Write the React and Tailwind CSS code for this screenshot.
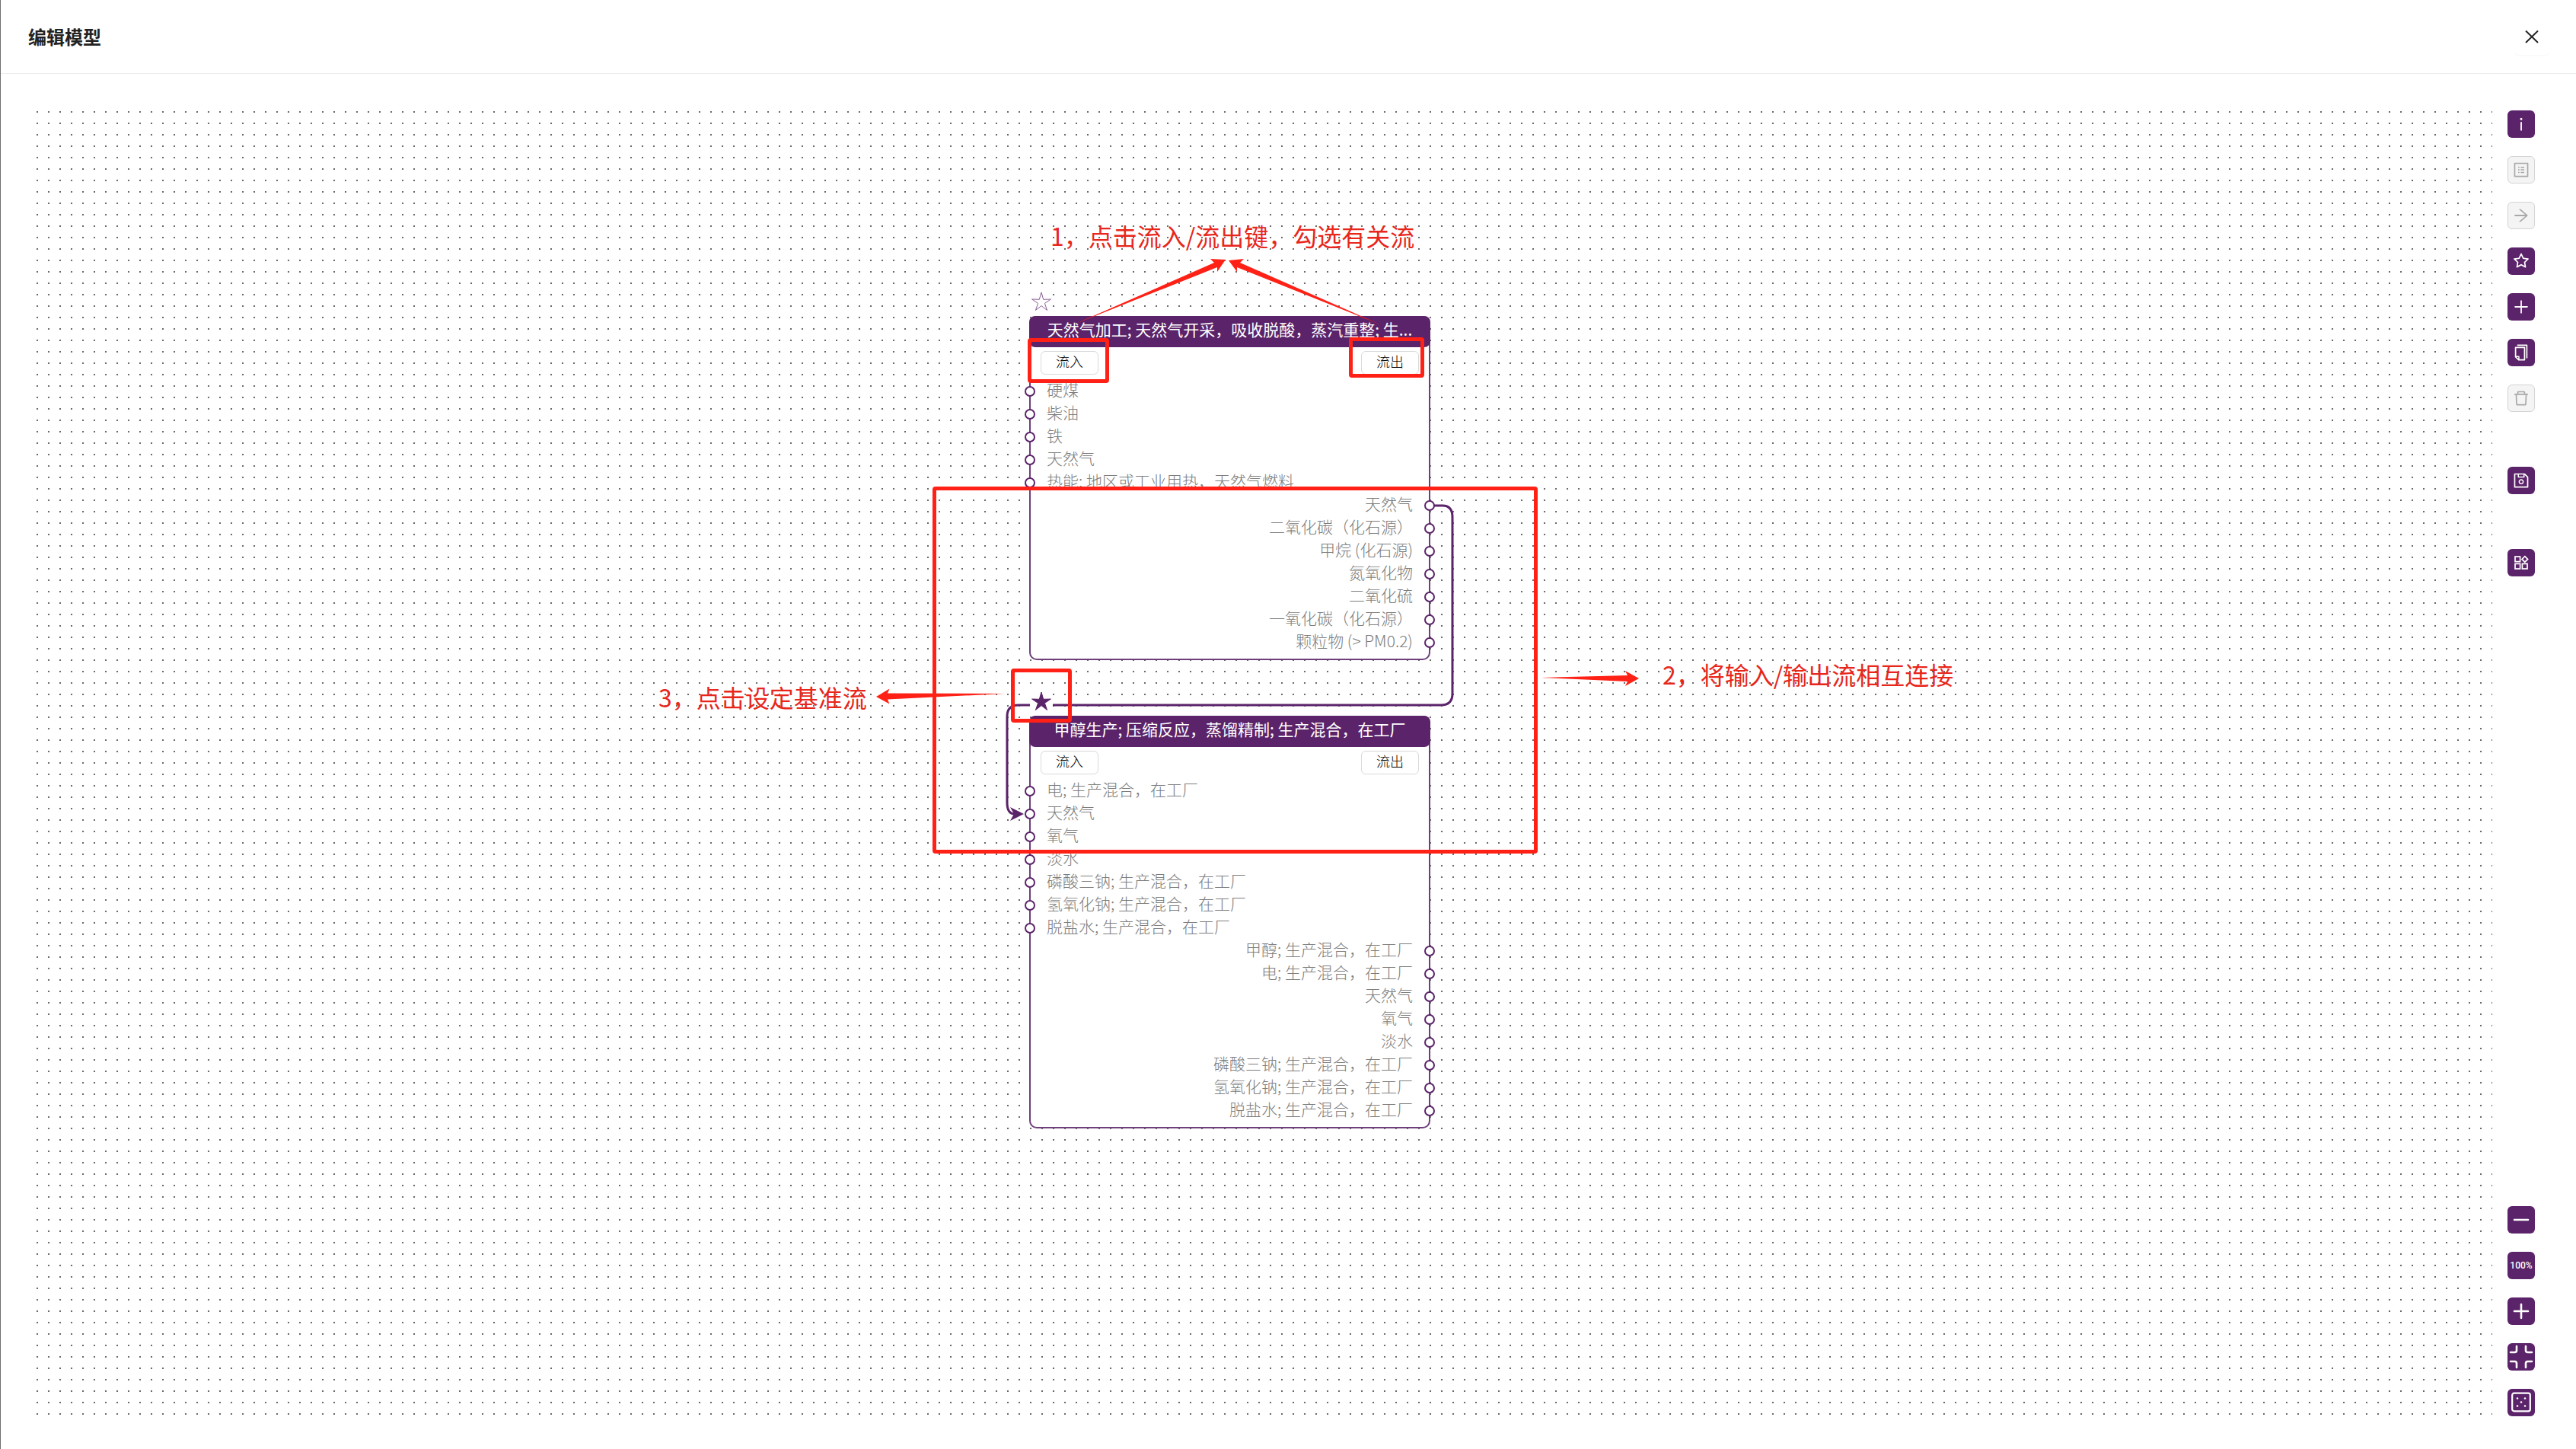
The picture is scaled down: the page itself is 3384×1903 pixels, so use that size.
import {
  AiOutlineArrowRight,
  AiOutlineCopy,
  AiOutlineDelete,
  AiOutlineInfo,
  AiOutlinePlus,
  AiOutlineProfile,
  AiOutlineSave,
  AiOutlineStar,
} from 'react-icons/ai'

function ToolButton({ label, disabled, children }) {
  return (
    <button
      type="button"
      aria-label={label}
      disabled={disabled}
      className="flex size-9 items-center justify-center rounded-md bg-[#5b2369] text-white disabled:border disabled:border-[#d4d4d4] disabled:bg-[#f4f4f4] disabled:text-[#a8a8a8]"
    >
      {children}
    </button>
  )
}

function ModulesIcon() {
  return (
    <svg viewBox="0 0 24 24" className="size-6" fill="none" stroke="currentColor" strokeWidth="1.7">
      <rect x="4" y="4" width="6.6" height="6.6" />
      <rect x="4" y="13.4" width="6.6" height="6.6" />
      <rect x="13.4" y="13.4" width="6.6" height="6.6" />
      <path d="M16.8 3.6 20.6 7.4 16.8 11.2 13 7.4Z" />
    </svg>
  )
}

function LineIcon({ d }) {
  return (
    <svg viewBox="0 0 36 36" className="size-9" fill="none" stroke="currentColor" strokeWidth="2.6" strokeLinecap="round">
      <path d={d} />
    </svg>
  )
}

function FitIcon() {
  return (
    <svg viewBox="0 0 36 36" className="size-9" fill="currentColor">
      <rect x="6.2" y="5.7" width="23.6" height="23.6" rx="2.5" fill="none" stroke="currentColor" strokeWidth="2.2" />
      <circle cx="13" cy="12.500" r="1.3" />
      <circle cx="23" cy="12.500" r="1.3" />
      <circle cx="18" cy="17.500" r="1.3" />
      <circle cx="13" cy="22.500" r="1.3" />
      <circle cx="23" cy="22.500" r="1.3" />
    </svg>
  )
}

function Toolbar() {
  return (
    <div className="flex w-9 shrink-0 flex-col pt-3">
      <div className="flex flex-col gap-6">
        <ToolButton label="信息"><AiOutlineInfo className="size-6" /></ToolButton>
        <ToolButton label="详情" disabled><AiOutlineProfile className="size-6" /></ToolButton>
        <ToolButton label="跳转" disabled><AiOutlineArrowRight className="size-6" /></ToolButton>
        <ToolButton label="基准"><AiOutlineStar className="size-6" /></ToolButton>
        <ToolButton label="添加"><AiOutlinePlus className="size-6" /></ToolButton>
        <ToolButton label="复制"><AiOutlineCopy className="size-6" /></ToolButton>
        <ToolButton label="删除" disabled><AiOutlineDelete className="size-6" /></ToolButton>
      </div>
      <div className="mt-18 flex flex-col gap-18">
        <ToolButton label="保存"><AiOutlineSave className="size-6" /></ToolButton>
        <ToolButton label="模块"><ModulesIcon /></ToolButton>
      </div>
      <div className="mt-auto flex flex-col gap-6">
        <ToolButton label="缩小"><LineIcon d="M9 18H27" /></ToolButton>
        <ToolButton label="缩放比例">
          <span className="font-['Roboto',sans-serif] text-[12px] leading-4 font-medium">100%</span>
        </ToolButton>
        <ToolButton label="放大"><LineIcon d="M9 18H27M18 9V27" /></ToolButton>
        <ToolButton label="收起">
          <LineIcon d="M4 12H9.5Q12 12 12 9.5V4M32 12H26.5Q24 12 24 9.5V4M4 24H9.5Q12 24 12 26.5V32M32 24H26.5Q24 24 24 26.5V32" />
        </ToolButton>
        <ToolButton label="适应画布"><FitIcon /></ToolButton>
      </div>
    </div>
  )
}

const STAR = 'M15 3 17.7 12.3 27.4 12 19.4 17.4 22.6 26.5 15 20.6 7.4 26.5 10.6 17.4 2.6 12 12.3 12.3Z'

function StarToggle({ active }) {
  return (
    <button type="button" aria-label="基准流" aria-pressed={active} className="block h-[30px] w-[30px] bg-white">
      <svg viewBox="0 0 30 30" className="h-[30px] w-[30px]">
        <path
          d={STAR}
          fill={active ? '#5b2369' : 'none'}
          stroke={active ? '#5b2369' : '#8a5f96'}
          strokeWidth="1"
          strokeLinejoin="round"
        />
      </svg>
    </button>
  )
}

function FlowButton({ children }) {
  return (
    <button
      type="button"
      className="h-[31px] w-[76px] rounded-md border border-[#d9d9d9] bg-white pb-1.5 text-[18px] leading-6 font-light text-black"
    >
      {children}
    </button>
  )
}

function Port({ label, side }) {
  const out = side === 'out'
  return (
    <li className={out ? 'relative flex h-[30px] items-center justify-end pr-[21px] pb-[6px]' : 'relative flex h-[30px] items-center pb-[6px] pl-[21px]'}>
      <span
        className={
          out
            ? 'absolute top-2 -right-2 size-3.5 rounded-full border-2 border-[#5b2369] bg-white'
            : 'absolute top-2 -left-2 size-3.5 rounded-full border-2 border-[#5b2369] bg-white'
        }
      />
      {label}
    </li>
  )
}

function ProcessNode({ title, inputs, outputs }) {
  return (
    <section className="w-[527px] rounded-[10px] border-2 border-[#6f3f7b] bg-white pb-1.5">
      <h2 className="-mx-0.5 -mt-0.5 h-[41px] rounded-lg bg-[#5b2369] px-2 text-center text-[21px] leading-[34px] font-normal whitespace-nowrap text-white">
        {title}
      </h2>
      <div className="flex justify-between px-[13px] pt-[5px] pb-[7px]">
        <FlowButton>流入</FlowButton>
        <FlowButton>流出</FlowButton>
      </div>
      <ul className="text-[21px] leading-6 font-light whitespace-nowrap text-[#7d7d7d]">
        {inputs.map((t) => <Port key={t} label={t} side="in" />)}
      </ul>
      <ul className="text-[21px] leading-6 font-light whitespace-nowrap text-[#7d7d7d]">
        {outputs.map((t) => <Port key={t} label={t} side="out" />)}
      </ul>
    </section>
  )
}

const gasNode = {
  title: '天然气加工; 天然气开采，吸收脱酸，蒸汽重整; 生...',
  inputs: ['硬煤', '柴油', '铁', '天然气', '热能; 地区或工业用热，天然气燃料'],
  outputs: ['天然气', '二氧化碳（化石源）', '甲烷 (化石源)', '氮氧化物', '二氧化硫', '一氧化碳（化石源）', '颗粒物 (> PM0.2)'],
}

const methanolNode = {
  title: '甲醇生产; 压缩反应，蒸馏精制; 生产混合，在工厂',
  inputs: ['电; 生产混合，在工厂', '天然气', '氧气', '淡水', '磷酸三钠; 生产混合，在工厂', '氢氧化钠; 生产混合，在工厂', '脱盐水; 生产混合，在工厂'],
  outputs: ['甲醇; 生产混合，在工厂', '电; 生产混合，在工厂', '天然气', '氧气', '淡水', '磷酸三钠; 生产混合，在工厂', '氢氧化钠; 生产混合，在工厂', '脱盐水; 生产混合，在工厂'],
}

function Canvas() {
  return (
    <div className="relative min-w-0 flex-1 overflow-hidden bg-[radial-gradient(circle_at_12px_14px,#6b6b6b_0.8px,transparent_1.6px)] bg-size-[15px_15px]">
      {/* connection between the two processes */}
      <svg className="absolute inset-0 size-full" fill="none" stroke="#5b2369" strokeWidth="3">
        <path d="M1846 531H1858Q1871 531 1871 546V778Q1871 793 1856 793H1301Q1286 793 1286 808V921Q1286 936 1296 936" />
        <path d="M1308 936 1290 927 1295 936 1290 945Z" fill="#5b2369" stroke="none" />
      </svg>

      <div className="absolute top-[248px] left-[1316px]"><StarToggle active={false} /></div>
      <div className="absolute top-[282px] left-[1315px]"><ProcessNode {...gasNode} /></div>
      <div className="absolute top-[773px] left-[1316px]"><StarToggle active /></div>
      <div className="absolute top-[807px] left-[1315px]"><ProcessNode {...methanolNode} /></div>

      {/* tutorial marks */}
      <div className="pointer-events-none absolute top-[311px] left-[1313px] h-[59px] w-[107px] rounded border-5 border-[#ff2116]" />
      <div className="pointer-events-none absolute top-[310px] left-[1735px] h-[53px] w-[99px] rounded border-5 border-[#ff2116]" />
      <div className="pointer-events-none absolute top-[506px] left-[1188px] h-[482px] w-[795px] rounded border-5 border-[#ff2116]" />
      <div className="pointer-events-none absolute top-[745px] left-[1291px] h-[71px] w-[80px] rounded border-5 border-[#ff2116]" />
      <svg className="pointer-events-none absolute inset-0 size-full" fill="#ff2116">
        <path d="M1374 293 1558 212 1553 207 1573 208 1562 224 1562 218Z" />
        <path d="M1778 294 1592 212 1597 207 1577 209 1588 224 1588 218Z" />
        <path d="M1283 778 1129 777.500 1131.500 771.500 1114 782 1131.500 791.500 1129 785.500Z" />
        <path d="M1988 757 2101 754 2098 748 2116 758 2098 768 2101 762Z" />
      </svg>
      <p className="absolute top-[156px] left-[1343px] text-[32px] leading-10 whitespace-nowrap text-[#e8261b]">1，点击流入/流出键，勾选有关流</p>
      <p className="absolute top-[732px] left-[2147px] text-[32px] leading-10 whitespace-nowrap text-[#e8261b]">2，将输入/输出流相互连接</p>
      <p className="absolute top-[762px] left-[828px] text-[32px] leading-10 whitespace-nowrap text-[#e8261b]">3，点击设定基准流</p>
    </div>
  )
}

export default function App() {
  return (
    <div className="flex min-h-screen flex-col border-l border-[#6e6e6e] bg-white font-['Noto_Sans_CJK_SC',sans-serif]">
      <header className="flex h-[97px] items-center justify-between border-b border-[#ececec] pr-[34px] pl-9">
        <h1 className="text-[24px] leading-8 font-bold text-[#222222]">编辑模型</h1>
        <button type="button" aria-label="关闭" className="flex size-12 items-center justify-center rounded-lg text-[#222222] shadow-[0_2px_0_#fafafa]">
          <svg viewBox="0 0 24 24" className="size-6" fill="none" stroke="currentColor" strokeWidth="1.9">
            <path d="M4 4.500 20 20M20 4.500 4 20" />
          </svg>
        </button>
      </header>
      <main className="flex flex-1 gap-5 pt-9 pr-[54px] pb-[43px] pl-9">
        <Canvas />
        <Toolbar />
      </main>
    </div>
  )
}
